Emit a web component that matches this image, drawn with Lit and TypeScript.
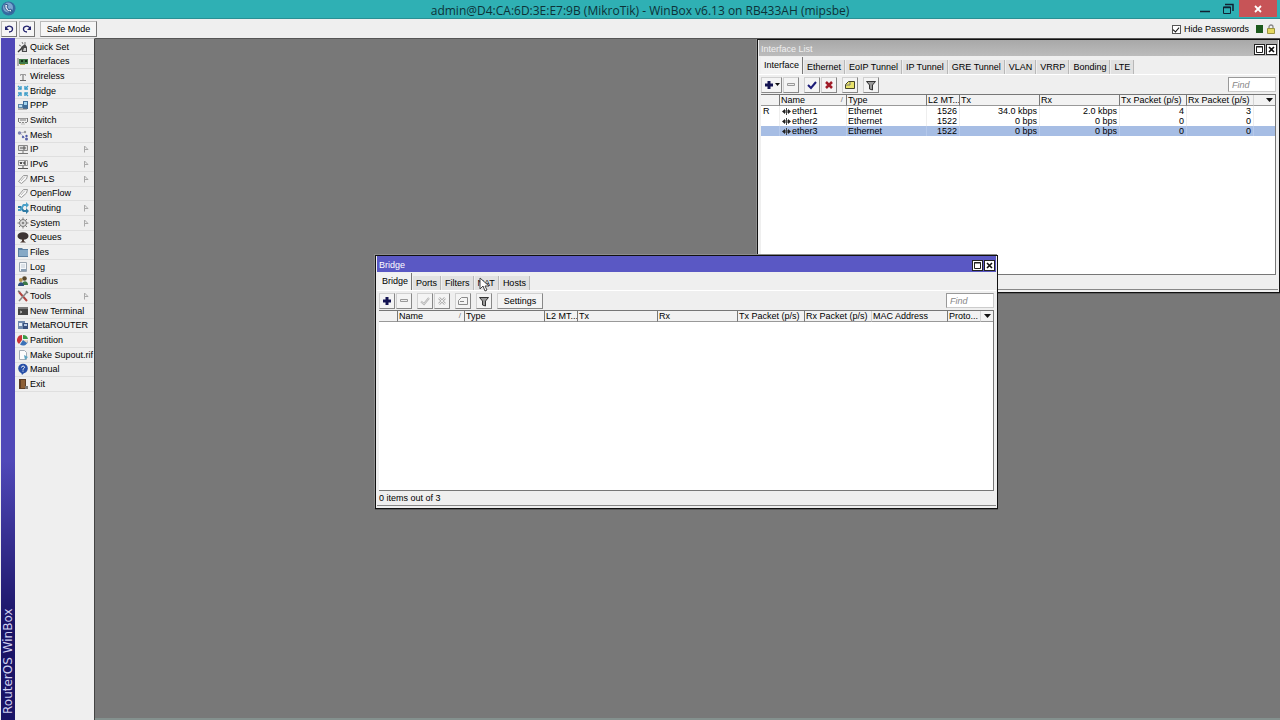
import { LitElement, html, svg, css, nothing, TemplateResult } from "lit";
import { classMap } from "lit/directives/class-map.js";

const icon = (size: number, body: unknown) =>
  html`<svg class="icon" width=${size} height=${size} viewBox="0 0 ${size} ${size}" aria-hidden="true">${body}</svg>`;

/* ---------- menu icons, 12 x 12 ---------- */
const menuIcons: Record<string, TemplateResult> = {
  quick: svg`<path d="M1 11l4-4" stroke="#333" stroke-width="1.500"/><path d="M4 6l4-3 2 3v5H5z" fill="#4a4a4a"/><path d="M5 1l1 2M8 1v2M2 4l2 1" stroke="#777"/><path d="M7 7h2v3H6z" fill="#ccc"/>`,
  nic: svg`<path d="M1 3v8" stroke="#777"/><path d="M2 4h9v5H2z" fill="#3f7a49"/><path d="M4 5h2v2H4zM8 5h2v2H8z" fill="#14301a"/><path d="M3 9h5v1H3z" fill="#b7a94c"/>`,
  wifi: svg`<path d="M6 4v6M3 10.500h6" stroke="#666" fill="none"/><path d="M3 4.500h6" stroke="#999"/><path d="M3.500 4v2M8.500 4v2" stroke="#aaa" fill="none"/>`,
  bridge: svg`<g stroke="#3b9cc9" stroke-width="1.400" fill="none"><path d="M1 1l3 3M11 1L8 4M1 11l3-3M11 11L8 8"/><path d="M4 1v3H1M8 1v3h3M4 11V8H1M8 11V8h3"/></g>`,
  ppp: svg`<path d="M1 5h5v4H1z" fill="#5e86a8"/><path d="M2 6h3v2H2z" fill="#bfe0f2"/><path d="M6 2h5v8H6z" fill="#3f6b96"/><path d="M7 3h3v3H7z" fill="#9fd2ee"/><path d="M1 10h9" stroke="#777"/>`,
  switch: svg`<path d="M1 4.500h10" stroke="#999"/><path d="M1.500 4v4M4 5v2M6 5v2M8 5v2M10.500 4v4" stroke="#777"/><path d="M2 8.500h8" stroke="#888" stroke-dasharray="2 1"/><path d="M4 10h4" stroke="#bbb"/>`,
  mesh: svg`<path d="M3 4l6-1M3 4l5 5" stroke="#bbc"/><circle cx="2.500" cy="4" r="1.700" fill="#7d82b0"/><circle cx="8" cy="3" r="1.200" fill="#999"/><circle cx="6" cy="8" r="1.200" fill="#5d68b0"/><circle cx="9.500" cy="7" r="1.200" fill="#4d58a8"/><circle cx="9.500" cy="10" r="1.500" fill="#5b62a8"/>`,
  ip: svg`<path d="M1.500 2.500h9v5h-9z" fill="#ddd" stroke="#888"/><path d="M4 4v2M6 4v2h2V4z" stroke="#555" fill="none"/><path d="M6 8v2M1 10.500h10" stroke="#777"/>`,
  ipv6: svg`<path d="M1.500 2.500h9v5h-9z" fill="#eee" stroke="#999"/><path d="M3 4l1 2 1-2M9 4H7v2h2" stroke="#222" fill="none"/><path d="M6 8v2M1 10.500h10" stroke="#555"/>`,
  tag: svg`<path d="M1.500 8.500l5-6 4 0-1 3.500-5 4.500z" fill="#f6f6f6" stroke="#999"/><path d="M4 8l4-4.500" stroke="#bbb"/>`,
  routing: svg`<path d="M1 4h3l3 4h2v-2l3 3-3 3v-2H6L3 6H1z" fill="#2f7ba5"/><path d="M1 9h3l3-5h2v2l3-3-3-3v2H6L3 7H1z" fill="#4aa0c8"/>`,
  gear: svg`<circle cx="6" cy="6" r="3.500" fill="#ddd" stroke="#777"/><circle cx="6" cy="6" r="1.300" fill="#888"/><path d="M6 .500v2M6 9.500v2M.500 6h2M9.500 6h2M2 2l1.500 1.500M8.500 8.500L10 10M10 2L8.500 3.500M2 10l1.500-1.500" stroke="#777"/>`,
  tree: svg`<ellipse cx="6" cy="5" rx="5.500" ry="3.800" fill="#3c3434"/><path d="M5 8h2v2l2 1.500H3L5 10z" fill="#4d3b33"/>`,
  folder: svg`<path d="M1 2h4l1 1h5v8H1z" fill="#5b7fa0"/><path d="M2 4h9v6H2z" fill="#86a9c6"/>`,
  log: svg`<path d="M2.500 1.500h7v9h-7z" fill="#f4f7fa" stroke="#9aa5b0"/><path d="M4 4h4M4 6h4" stroke="#c3ccd5"/><path d="M4 8h5v2H4z" fill="#8ba0b4"/>`,
  users: svg`<circle cx="7.500" cy="3.500" r="2.300" fill="#59492c"/><path d="M5 10c0-5 6-5 6 0z" fill="#3d7a46"/><circle cx="3.800" cy="5" r="1.900" fill="#b58f4a"/><path d="M1 11c0-5 6-5 6 0z" fill="#2f4f7c"/>`,
  tools: svg`<path d="M2 2l8 9" stroke="#b04540" stroke-width="2"/><path d="M10 2l-8 9" stroke="#8b8b8b" stroke-width="1.600"/><path d="M9 1l2 2M1 1l2 1" stroke="#777" stroke-width="1.500"/>`,
  terminal: svg`<path d="M1 2h10v8H1z" fill="#444"/><path d="M1 2h10v2H1z" fill="#777"/><path d="M3 6l2 1-2 1" stroke="#bbb" fill="none"/>`,
  meta: svg`<path d="M1 2h7v8H1z" fill="#7089ad"/><path d="M2 4h3v3H2z" fill="#e4ecf6"/><path d="M6 4h5v6H6z" fill="#38507d"/><path d="M7 5h3v2H7z" fill="#b6c9e4"/>`,
  pie: svg`<path d="M5 6V1a5 5 0 0 0-3 9z" fill="#cc3338"/><path d="M6 5V1a5 5 0 0 1 5 4z" fill="#3a9b48"/><path d="M6 6h5a5 5 0 0 1-8 4.500z" fill="#3a71b8"/><path d="M6 6h5a5 5 0 0 1-1 3z" fill="#e8d8c0"/>`,
  supout: svg`<path d="M2.500 1.500h5l2 2v7h-7z" fill="#fdfdfd" stroke="#a5adb5"/><path d="M7 6l4 2-3 3z" fill="#5fa6c4"/>`,
  help: svg`<circle cx="6" cy="5.500" r="4.800" fill="#2850a8"/><path d="M4 9l1 3 3-3z" fill="#2850a8"/><path d="M4.500 4.500C4.500 2.500 8 2.700 7.500 4.700 7 5.500 6 5.500 6 6.800M6 7.600v1" stroke="#fff" fill="none"/>`,
  exit: svg`<path d="M2 1h7v10H2z" fill="#5d3d25"/><path d="M4 2h4v8H4z" fill="#8c6038"/><path d="M8 8h3v3H8z" fill="#777"/>`,
};

/* ---------- toolbar icons, 12 x 12 ---------- */
const toolIcons: Record<string, TemplateResult> = {
  add: svg`<path d="M6 2v8M2 6h8" stroke="#141452" stroke-width="3"/>`,
  remove: svg`<path d="M2.500 4.500h7v2h-7z" fill="#eee" stroke="#999"/>`,
  enable: svg`<path d="M2 6l3 3 5-6" fill="none" stroke="#1c1c78" stroke-width="2"/>`,
  disable: svg`<path d="M3 3l6 6M9 3l-6 6" stroke="#a01c28" stroke-width="2.500"/>`,
  enableOff: svg`<path d="M2 6.500l3 2.500 5-6" fill="none" stroke="#b4b4b4" stroke-width="2"/><path d="M2 6.500l3 2.500 5-6" fill="none" stroke="#eee" stroke-width=".6"/>`,
  disableOff: svg`<path d="M3 3l6 6M9 3l-6 6" stroke="#b4b4b4" stroke-width="2.500"/><path d="M3 3l6 6M9 3l-6 6" stroke="#eee" stroke-width="1"/>`,
  note: svg`<path d="M4.500 2.500h6v7h-9v-4z" fill="#e9e36a" stroke="#444428"/><path d="M2 6h4V3" stroke="#777" fill="none"/>`,
  noteOff: svg`<path d="M4.500 2.500h6v7h-9v-4z" fill="#f4f4f4" stroke="#8a8a8a"/><path d="M3 6.500h4" stroke="#888" fill="none"/>`,
  filter: svg`<path d="M1.500 2.500h9L7.500 6v5l-3-1V6z" fill="#999" stroke="#333"/>`,
};

interface Tool { name: string; icon: string; split?: boolean; off?: boolean; group?: boolean }
interface Column { label: string; width: number; sorted?: boolean; right?: boolean; bare?: boolean }
interface Row { cells: string[]; selected?: boolean }

class WinPanel extends LitElement {
  static properties = {
    heading: {}, tabs: { attribute: false }, tools: { attribute: false },
    columns: { attribute: false }, rows: { attribute: false },
    action: {}, status: {}, active: { type: Boolean, reflect: true },
  };
  declare heading: string;
  declare tabs: string[];
  declare tools: Tool[];
  declare columns: Column[];
  declare rows: Row[];
  declare action: string;
  declare status: string;
  declare active: boolean;

  constructor() {
    super();
    this.heading = ""; this.tabs = []; this.tools = []; this.columns = []; this.rows = [];
    this.action = ""; this.status = ""; this.active = false;
  }

  static styles = css`
    :host { display: flex; flex-direction: column; box-sizing: border-box; border: 1px solid #111;
      background: #efefef; padding: 0 1px 2px; box-shadow: -1px -1px 0 #8c8c8c, 0 1px 0 #5c5c5c; color: #000;
      font: 9px/12px "Liberation Sans", Arial, sans-serif; }
    * { box-sizing: border-box; }
    button, input { font: inherit; color: inherit; margin: 0; padding: 0; border-radius: 0; }
    svg { display: block; }
    .title { display: flex; align-items: center; gap: 1px; height: 16px; padding: 2px 1px 0 2px; color: #f0f0f0;
      background: linear-gradient(#a8a8a8, #bcbcbc); }
    :host([active]) .title { background: #5a58c4; color: #fff; }
    .title h2 { flex: 1; margin: 0; font: inherit; }
    .box { width: 11px; height: 11px; border: 1px solid #222; background: #fff; display: grid; place-items: center; }
    .tabs { display: flex; align-items: flex-end; height: 19px; padding-left: 2px; border-bottom: 1px solid #fff; }
    .tab { height: 14px; padding: 0 3px; margin-left: 1px; border: 0; border-right: 1px solid #b8b8b8; background: #e1e1e1; }
    .tab.on { height: 17px; padding: 0 3px 2px; margin-left: 0; background: #f2f2f2; border-right-color: #777; }
    .tools { display: flex; align-items: center; gap: 1px; height: 19px; padding: 0 2px; }
    .tool { display: flex; align-items: center; justify-content: center; width: 16px; height: 16px; background: #f4f4f4;
      border: 1px solid #d0d0d0; border-right-color: #888; border-bottom-color: #888; }
    .tool.split { width: 21px; }
    .tool.group { margin-left: 4px; }
    .tool.wide { width: 46px; margin-left: 4px; }
    .find { width: 48px; height: 15px; margin-left: auto; padding: 0 3px; background: #fff; border: 1px solid #999;
      border-right-color: #ccc; border-bottom-color: #ccc; outline: 0; }
    .find::placeholder { color: #888; font-style: italic; opacity: 1; }
    .grid { flex: 1; min-height: 0; margin: 0 2px; background: #fff; border: solid #777; border-width: 1px 1px 1px 0; overflow: hidden; }
    table { width: 100%; table-layout: fixed; border-collapse: separate; border-spacing: 0; line-height: 10px; }
    th, td { padding: 0 0 0 1px; height: 10px; font-weight: normal; text-align: left; white-space: nowrap; overflow: hidden; }
    th { background: #f2f2f2; border-left: 1px solid #777; border-bottom: 1px solid #999; }
    th.bare { border-left-color: #d4d4d4; }
    th:first-child { border-left: 0; }
    td { border-left: 1px solid #eee; }
    td:first-child { border-left: 0; padding-left: 2px; }
    td.right { text-align: right; padding-right: 2px; }
    tr.sel td { background: #a6bde4; border-left-color: #b4c8ea; }
    .head, .name { display: flex; align-items: center; justify-content: space-between; }
    .head .sort { margin-right: 3px; color: #777; font-size: 8px; }
    .name { justify-content: flex-start; gap: 1px; padding-left: 1px; }
    .drop { display: block; margin-left: auto; width: 10px; height: 10px; border: 0; background: none; }
    .status { height: 15px; padding: 1px 3px 0 2px; border-bottom: 1px solid #888; }
  `;

  private cell(text: string, i: number) {
    const col = this.columns[i];
    return html`<td class=${classMap({ right: !!col.right })}>${i === 1
      ? html`<div class="name">${icon(9, svg`<path d="M0 4.500L3 2v5zM9 4.500L6 2v5z" fill="#222"/><path d="M3 3v3M6 3v3" stroke="#222"/><path d="M4.500 1v7" stroke="#444"/>`)}${text}</div>`
      : text}</td>`;
  }

  render() {
    return html`
      <header class="title">
        <h2>${this.heading}</h2>
        <button class="box" aria-label="Maximize">${icon(7, svg`<path d="M.5 .5h6v6h-6zM0 1h7" fill="none" stroke="#222"/>`)}</button>
        <button class="box" aria-label="Close">${icon(7, svg`<path d="M1 1l5 5M6 1L1 6" stroke="#111" stroke-width="1.600"/>`)}</button>
      </header>
      <div class="tabs" role="tablist">
        ${this.tabs.map((t, i) => html`<button role="tab" aria-selected=${i === 0} class=${classMap({ tab: true, on: i === 0 })}>${t}</button>`)}
      </div>
      <div class="tools">
        ${this.tools.map(t => html`<button aria-label=${t.name} ?disabled=${t.off}
          class=${classMap({ tool: true, split: !!t.split, group: !!t.group })}>${icon(12, toolIcons[t.icon])}${t.split
            ? html`<svg width="5" height="3" viewBox="0 0 5 3"><path d="M0 0h5L2.500 3z" fill="#111"/></svg>` : nothing}</button>`)}
        ${this.action ? html`<button class="tool wide">${this.action}</button>` : nothing}
        <input class="find" type="text" placeholder="Find" aria-label="Find">
      </div>
      <div class="grid">
        <table>
          <colgroup>${this.columns.map((c, i) => i === this.columns.length - 1 ? html`<col>` : html`<col style="width:${c.width}px">`)}</colgroup>
          <thead><tr>${this.columns.map((c, i) => html`<th class=${classMap({ bare: !!c.bare })}>${i === this.columns.length - 1
            ? html`<button class="drop" aria-label="Show columns">${icon(10, svg`<path d="M1 3h7L4.500 7z" fill="#111"/>`)}</button>`
            : html`<div class="head">${c.label}${c.sorted ? html`<span class="sort">/</span>` : nothing}</div>`}</th>`)}</tr></thead>
          <tbody>${this.rows.map(r => html`<tr class=${classMap({ sel: !!r.selected })}>${r.cells.map((t, i) => this.cell(t, i))}</tr>`)}</tbody>
        </table>
      </div>
      <footer class="status">${this.status}</footer>`;
  }
}
customElements.define("win-panel", WinPanel);

const menu: [string, string, boolean?][] = [
  ["Quick Set", "quick"], ["Interfaces", "nic"], ["Wireless", "wifi"], ["Bridge", "bridge"], ["PPP", "ppp"],
  ["Switch", "switch"], ["Mesh", "mesh"], ["IP", "ip", true], ["IPv6", "ipv6", true], ["MPLS", "tag", true],
  ["OpenFlow", "tag"], ["Routing", "routing", true], ["System", "gear", true], ["Queues", "tree"], ["Files", "folder"],
  ["Log", "log"], ["Radius", "users"], ["Tools", "tools", true], ["New Terminal", "terminal"], ["MetaROUTER", "meta"],
  ["Partition", "pie"], ["Make Supout.rif", "supout"], ["Manual", "help"], ["Exit", "exit"],
];

const interfaceTabs = ["Interface", "Ethernet", "EoIP Tunnel", "IP Tunnel", "GRE Tunnel", "VLAN", "VRRP", "Bonding", "LTE"];
const bridgeTabs = ["Bridge", "Ports", "Filters", "NAT", "Hosts"];

const interfaceTools: Tool[] = [
  { name: "Add", icon: "add", split: true }, { name: "Remove", icon: "remove" },
  { name: "Enable", icon: "enable", group: true }, { name: "Disable", icon: "disable" },
  { name: "Comment", icon: "note", group: true }, { name: "Filter", icon: "filter", group: true },
];
const bridgeTools: Tool[] = [
  { name: "Add", icon: "add" }, { name: "Remove", icon: "remove", off: true },
  { name: "Enable", icon: "enableOff", off: true, group: true }, { name: "Disable", icon: "disableOff", off: true },
  { name: "Comment", icon: "noteOff", off: true, group: true }, { name: "Filter", icon: "filter", group: true },
];

const commonColumns: Column[] = [
  { label: "", width: 18 }, { label: "Name", width: 67, sorted: true }, { label: "Type", width: 80 },
  { label: "L2 MT...", width: 33, right: true }, { label: "Tx", width: 80, right: true }, { label: "Rx", width: 80, right: true },
  { label: "Tx Packet (p/s)", width: 67, right: true }, { label: "Rx Packet (p/s)", width: 67, right: true },
];
const interfaceColumns: Column[] = [...commonColumns, { label: "", width: 22, bare: true }];
const bridgeColumns: Column[] = [...commonColumns, { label: "MAC Address", width: 76, bare: true }, { label: "Proto...", width: 33 }, { label: "", width: 13, bare: true }];

const interfaceRows: Row[] = [
  { cells: ["R", "ether1", "Ethernet", "1526", "34.0 kbps", "2.0 kbps", "4", "3", ""] },
  { cells: ["", "ether2", "Ethernet", "1522", "0 bps", "0 bps", "0", "0", ""] },
  { cells: ["", "ether3", "Ethernet", "1522", "0 bps", "0 bps", "0", "0", ""], selected: true },
];

class AppRoot extends LitElement {
  static styles = css`
    :host { display: flex; flex-direction: column; height: 100vh; overflow: hidden; background: #efefef; color: #000;
      font: 9px/12px "Liberation Sans", Arial, sans-serif; }
    * { box-sizing: border-box; }
    button, input { font: inherit; color: inherit; margin: 0; padding: 0; border-radius: 0; }
    svg { display: block; }
    .titlebar { display: grid; grid-template-columns: 1fr auto 1fr; align-items: start; height: 19px; background: #2fb0b4;
      border-bottom: 1px solid #2a9094; }
    .titlebar h1 { margin: 0; font: 12px/21px "Open Sans", "Noto Sans", sans-serif; color: #0d3238; }
    .logo { padding: 1px; }
    .controls { display: flex; justify-content: flex-end; padding-right: 3px; }
    .ctl { display: grid; place-items: center; width: 23px; height: 17px; border: 0; background: none; }
    .ctl.close { width: 38px; background: #c75457; }
    .bar { display: flex; align-items: center; height: 19px; padding: 1px 4px 0 1px; gap: 2px; }
    .btn { display: grid; place-items: center; width: 16px; height: 16px; background: #f6f6f6;
      border: 1px solid #bbb; border-right-color: #777; border-bottom-color: #777; }
    .btn.wide { width: 57px; margin-left: 3px; }
    .secure { display: flex; align-items: center; gap: 3px; margin-left: auto; }
    .secure label { display: flex; align-items: center; gap: 3px; }
    .secure input { appearance: none; width: 9px; height: 9px; background: #fff; border: 1px solid #555; display: grid; place-items: center; }
    .secure input:checked::after { content: ""; width: 3px; height: 5px; margin-bottom: 2px; border: solid #111; border-width: 0 1px 1px 0; rotate: 40deg; }
    .load { width: 7px; height: 8px; margin-left: 4px; background: #1d5a1d; }
    .main { flex: 1; min-height: 0; display: flex; }
    .brand { width: 14px; margin-left: 1px; padding-top: 6px; display: flex; align-items: center; color: #cfd0f0;
      writing-mode: vertical-rl; rotate: 180deg; background: linear-gradient(#1a1466 14%, #5048b8 38%);
      font: 12px/14px "DejaVu Sans", sans-serif; }
    nav { width: 80px; padding-top: 1px; background: #efefef; border-top: 1px solid #ccc; border-right: 1px solid #444; }
    .menu { display: grid; grid-template-rows: repeat(24, 1fr); height: 352px; margin: 0; padding: 0; list-style: none; }
    .item { display: flex; align-items: center; gap: 1px; height: 100%; padding: 0 5px 0 2px; color: inherit;
      text-decoration: none; white-space: nowrap; border-bottom: 1px solid #dfdfdf; overflow: hidden; }
    .item .icon { flex: none; }
    .item .more { flex: none; margin-left: auto; }
    .item.long { padding-right: 0; }
    .desk { flex: 1; position: relative; background: #787878; border-top: 1px solid #555; border-bottom: 2px solid #84918e; overflow: hidden; }
    .win { position: absolute; height: 254px; }
    .win.list { top: 0; right: 0; width: 523px; }
    .win.bridge { top: 216px; left: 280px; width: 623px; }
    .cursor { position: absolute; top: 238px; left: 384px; }
  `;

  render() {
    return html`
      <header class="titlebar">
        <div class="logo">${icon(15, svg`<circle cx="7.500" cy="7.500" r="7" fill="#356aa0"/><circle cx="7" cy="6.500" r="5" fill="#7ba6cf"/><path d="M4 3c-1 5 2 8 7 8l-1-3-2 1-2-3 1-2z" fill="#e4eef8" stroke="#2c5688"/>`)}</div>
        <h1>admin@D4:CA:6D:3E:E7:9B (MikroTik) - WinBox v6.13 on RB433AH (mipsbe)</h1>
        <div class="controls">
          <button class="ctl" aria-label="Minimize">${icon(12, svg`<path d="M1 8.500h10" stroke="#123" stroke-width="1.500"/>`)}</button>
          <button class="ctl" aria-label="Restore">${icon(12, svg`<path d="M1.500 4h7v6.500h-7z" fill="none" stroke="#123"/><path d="M1 4.500h8M3 1.500h8V8" fill="none" stroke="#123" stroke-width="1.500"/>`)}</button>
          <button class="ctl close" aria-label="Close">${icon(8, svg`<path d="M1 1l6 6M7 1L1 7" stroke="#fff" stroke-width="1.800"/>`)}</button>
        </div>
      </header>
      <div class="bar">
        <button class="btn" aria-label="Undo">${icon(12, svg`<path d="M3 5c2-3 7-2 6.500 1.500C9.200 8.500 7.500 9 6 9" fill="none" stroke="#23236e" stroke-width="1.300"/><path d="M2 3v4h4z" fill="#23236e"/>`)}</button>
        <button class="btn" aria-label="Redo">${icon(12, svg`<path d="M9 5c-2-3-7-2-6.500 1.500C2.800 8.500 4.500 9 6 9" fill="none" stroke="#23236e" stroke-width="1.300"/><path d="M10 3v4H6z" fill="#23236e"/>`)}</button>
        <button class="btn wide">Safe Mode</button>
        <div class="secure">
          <label><input type="checkbox" checked>Hide Passwords</label>
          <span class="load"></span>
          ${icon(10, svg`<path d="M3 5V3a2 2 0 0 1 4 0v2" fill="none" stroke="#888" stroke-width="1.300"/><path d="M1.500 4.500h7v5h-7z" fill="#e4d860" stroke="#9a9340"/>`)}
        </div>
      </div>
      <div class="main">
        <div class="brand">RouterOS WinBox</div>
        <nav aria-label="Main menu">
          <ul class="menu">
            ${menu.map(([label, name, sub]) => html`<li><a href="#" class=${classMap({ item: true, long: label.length > 12 })}>
              ${icon(12, menuIcons[name])}<span>${label}</span>
              ${sub ? html`<svg class="more" width="6" height="8" viewBox="0 0 6 8"><path d="M1.500 7.500V1L5 4.500H2" fill="none" stroke="#aaa"/></svg>` : nothing}</a></li>`)}
          </ul>
        </nav>
        <main class="desk">
          <win-panel class="win list" heading="Interface List" .tabs=${interfaceTabs} .tools=${interfaceTools}
            .columns=${interfaceColumns} .rows=${interfaceRows}></win-panel>
          <win-panel class="win bridge" active heading="Bridge" action="Settings" status="0 items out of 3" .tabs=${bridgeTabs}
            .tools=${bridgeTools} .columns=${bridgeColumns}></win-panel>
          <svg class="cursor" width="12" height="15" viewBox="0 0 12 15" aria-hidden="true"><path d="M1 1v11l3-3 2 5 2-1-2-4h4z" fill="#fff" stroke="#444"/></svg>
        </main>
      </div>`;
  }
}
customElements.define("app-root", AppRoot);
